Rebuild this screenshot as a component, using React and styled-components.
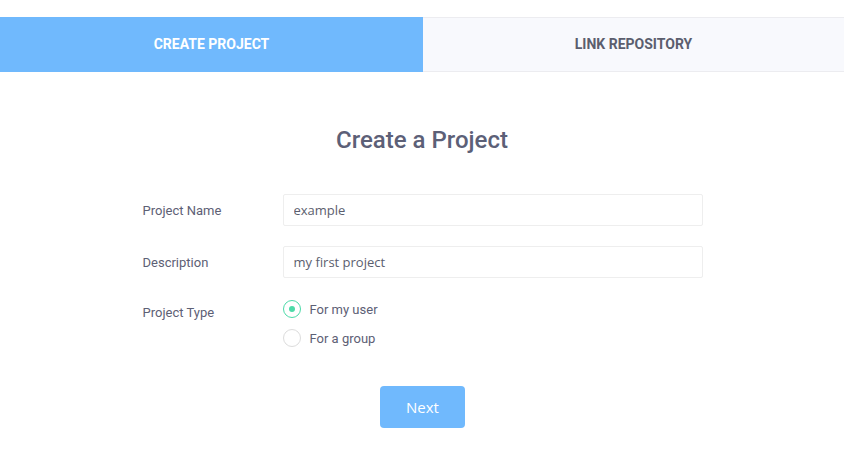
import React, { useState } from 'react';
import styled, { createGlobalStyle } from 'styled-components';

const GlobalStyle = createGlobalStyle`
  html, body {
    margin: 0;
    padding: 0;
    background: #fff;
    font-family: Roboto, "Liberation Sans", sans-serif;
  }
`;

const Page = styled.div`
  padding-top: 17px;
`;

const Tabs = styled.div`
  display: grid;
  grid-template-columns: 423px 1fr;
  height: 55px;
`;

const Tab = styled.button`
  display: flex;
  align-items: center;
  justify-content: center;
  margin: 0;
  padding: 0 0 1px;
  border: none;
  border-top: 1px solid ${({ active }) => (active ? '#70b9fd' : '#ececf0')};
  border-bottom: 1px solid ${({ active }) => (active ? '#70b9fd' : '#ececf0')};
  background: ${({ active }) => (active ? '#70b9fd' : '#f8f9fd')};
  color: ${({ active }) => (active ? '#fff' : '#5b5e6e')};
  font-family: Roboto, sans-serif;
  font-weight: 700;
  font-size: 14px;
  cursor: pointer;
`;

const Title = styled.h1`
  margin: 53px 0 0;
  text-align: center;
  font-family: Roboto, sans-serif;
  font-weight: 500;
  font-size: 24px;
  line-height: 30px;
  color: #5c6077;
`;

const Form = styled.form`
  width: 560px;
  margin: 39px auto 0;
  padding-left: 1px;
  display: flex;
  flex-direction: column;
`;

const Row = styled.div`
  display: grid;
  grid-template-columns: 140px 420px;
  align-items: ${({ top }) => (top ? 'start' : 'center')};
  margin-bottom: ${({ gap }) => gap}px;
`;

const Label = styled.label`
  font-family: Roboto, sans-serif;
  font-size: 13px;
  color: #5d6075;
  padding-top: ${({ top }) => (top ? '6px' : '0')};
`;

const Input = styled.input`
  box-sizing: border-box;
  width: 420px;
  height: 32px;
  padding: 0 10px;
  border: 1px solid #eeeeee;
  border-radius: 2px;
  font-family: "Open Sans", sans-serif;
  font-size: 13px;
  color: #5b5e6e;
  outline: none;
`;

const Options = styled.div`
  display: flex;
  flex-direction: column;
  gap: 9px;
`;

const Option = styled.label`
  display: flex;
  align-items: center;
  gap: 9px;
  font-family: Roboto, sans-serif;
  font-size: 13px;
  color: #5d6075;
  cursor: pointer;
  height: 20px;
`;

const Radio = styled.span`
  box-sizing: border-box;
  width: 18px;
  height: 18px;
  border-radius: 50%;
  border: 1px solid ${({ checked }) => (checked ? '#4cdaa8' : '#dcdcdc')};
  display: flex;
  align-items: center;
  justify-content: center;

  &::after {
    content: '';
    width: 6px;
    height: 6px;
    border-radius: 50%;
    background: #4cdaa8;
    display: ${({ checked }) => (checked ? 'block' : 'none')};
  }
`;

const Actions = styled.div`
  display: flex;
  justify-content: center;
  margin-top: 38px;
`;

const NextButton = styled.button`
  width: 85px;
  height: 42px;
  border: none;
  border-radius: 4px;
  background: #70b9fd;
  color: #fff;
  font-family: "Open Sans", sans-serif;
  font-size: 15px;
  cursor: pointer;
`;

const App = () => {
  const [tab, setTab] = useState('create');
  const [type, setType] = useState('user');
  const [name, setName] = useState('example');
  const [description, setDescription] = useState('my first project');

  return (
    <>
      <GlobalStyle />
      <Page>
        <Tabs>
          <Tab active={tab === 'create'} onClick={() => setTab('create')}>
            CREATE PROJECT
          </Tab>
          <Tab active={tab === 'link'} onClick={() => setTab('link')}>
            LINK REPOSITORY
          </Tab>
        </Tabs>
        <Title>Create a Project</Title>
        <Form onSubmit={(e) => e.preventDefault()}>
          <Row gap={20}>
            <Label>Project Name</Label>
            <Input value={name} onChange={(e) => setName(e.target.value)} />
          </Row>
          <Row gap={21}>
            <Label>Description</Label>
            <Input
              value={description}
              onChange={(e) => setDescription(e.target.value)}
            />
          </Row>
          <Row top gap={0}>
            <Label top>Project Type</Label>
            <Options>
              <Option onClick={() => setType('user')}>
                <Radio checked={type === 'user'} />
                For my user
              </Option>
              <Option onClick={() => setType('group')}>
                <Radio checked={type === 'group'} />
                For a group
              </Option>
            </Options>
          </Row>
          <Actions>
            <NextButton type="submit">Next</NextButton>
          </Actions>
        </Form>
      </Page>
    </>
  );
};

export default App;
